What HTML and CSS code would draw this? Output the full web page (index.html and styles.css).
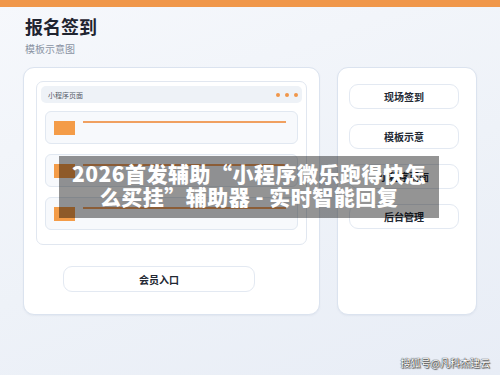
FILE: index.html
```html
<!DOCTYPE html>
<html lang="zh-CN">
<head>
<meta charset="utf-8">
<title>报名签到</title>
<link rel="stylesheet" href="styles.css">
</head>
<body>
<div class="topbar"></div>
<header class="head">
  <h1 class="title">报名签到</h1>
  <div class="subtitle">模板示意图</div>
</header>
<main class="main">
  <section class="card left">
    <div class="phone">
      <div class="phone-head">
        <span class="phone-title">小程序页面</span>
        <span class="dots"><i></i><i></i><i></i></span>
      </div>
      <div class="items">
        <div class="item"><span class="thumb"></span><span class="line"></span></div>
        <div class="item"><span class="thumb"></span><span class="line"></span></div>
        <div class="item"><span class="thumb"></span><span class="line"></span></div>
      </div>
    </div>
    <button class="btn member">会员入口</button>
  </section>
  <section class="card right">
    <button class="btn side">现场签到</button>
    <button class="btn side">模板示意</button>
    <button class="btn side">小程序页面</button>
    <button class="btn side">后台管理</button>
  </section>
</main>
<div class="overlay">2026首发辅助“小程序微乐跑得快怎<br>么买挂”辅助器 - 实时智能回复</div>
<div class="watermark">搜狐号@凡科杰建云</div>
</body>
</html>
```
FILE: styles.css
```css
* { box-sizing: border-box; }
html, body { margin: 0; padding: 0; }
body {
  width: 500px;
  height: 375px;
  overflow: hidden;
  position: relative;
  font-family: "Noto Sans CJK SC", "Noto Sans", sans-serif;
  background: linear-gradient(160deg, #f6f8fc 0%, #eef2f8 55%, #e8edf6 100%);
  color: #222;
}
.topbar { height: 7px; background: #f0974a; }
.head { padding: 6px 0 0 25px; height: 60px; }
.title {
  margin: 0;
  font-size: 18px;
  line-height: 26px;
  font-weight: 700;
  color: #1f2430;
}
.subtitle {
  margin-top: 3px;
  font-size: 10px;
  line-height: 14px;
  color: #8a93a3;
}
.main {
  display: flex;
  gap: 17px;
  padding-left: 23px;
}
.card {
  background: #fff;
  border: 1px solid #dbe3ef;
  border-radius: 11px;
  height: 248px;
  box-shadow: 0 1px 2px rgba(60, 80, 120, 0.06);
}
.card.left {
  width: 297px;
  padding: 13px 12px 0 12px;
  display: flex;
  flex-direction: column;
}
.phone {
  border: 1px solid #e1e7f0;
  border-radius: 7px;
  height: 164px;
  padding: 4px 4px 0 4px;
}
.phone-head {
  height: 17px;
  background: #eef2f7;
  border-radius: 5px;
  display: flex;
  align-items: center;
  justify-content: space-between;
  padding: 0 4px 0 7px;
}
.phone-title { font-size: 7px; color: #555c68; line-height: 10px; }
.dots { display: flex; gap: 5px; }
.dots i {
  display: block;
  width: 4px;
  height: 4px;
  border-radius: 50%;
  background: #f0974a;
}
.items {
  display: flex;
  flex-direction: column;
  gap: 10px;
  padding: 8px 4px 0 4px;
}
.item {
  height: 33px;
  background: #f7f9fc;
  border: 1px solid #e1e8f1;
  border-radius: 6px;
  display: flex;
  align-items: flex-start;
  padding: 9px 11px 0 8px;
  gap: 8px;
}
.thumb {
  width: 21px;
  height: 14px;
  background: #f49c48;
  flex: none;
}
.line {
  flex: 1;
  height: 2px;
  background: #f0a060;
  margin-top: 0;
}
.btn {
  font-family: inherit;
  background: #fff;
  border: 1px solid #e3e9f2;
  border-radius: 9px;
  font-size: 10px;
  font-weight: 700;
  color: #222833;
  padding: 0;
  cursor: pointer;
}
.member {
  width: 192px;
  height: 26px;
  margin: 21px 0 0 27px;
}
.card.right {
  width: 140px;
  padding: 16px 0 0 11px;
  display: flex;
  flex-direction: column;
  gap: 15px;
}
.side { width: 110px; height: 25px; }
.overlay {
  position: absolute;
  left: 59px;
  top: 156px;
  width: 380px;
  height: 62px;
  background: rgba(0, 0, 0, 0.42);
  color: #fff;
  font-size: 21px;
  font-weight: 900;
  letter-spacing: 0.5px;
  line-height: 23px;
  text-align: center;
  padding-top: 6px;
  white-space: nowrap;
}
.watermark {
  position: absolute;
  right: 10px;
  bottom: 5px;
  font-size: 10px;
  line-height: 14px;
  color: #fff;
  text-shadow: 0 0 1px #333, 0 0 1px #333, 1px 1px 1px #555;
}
```
